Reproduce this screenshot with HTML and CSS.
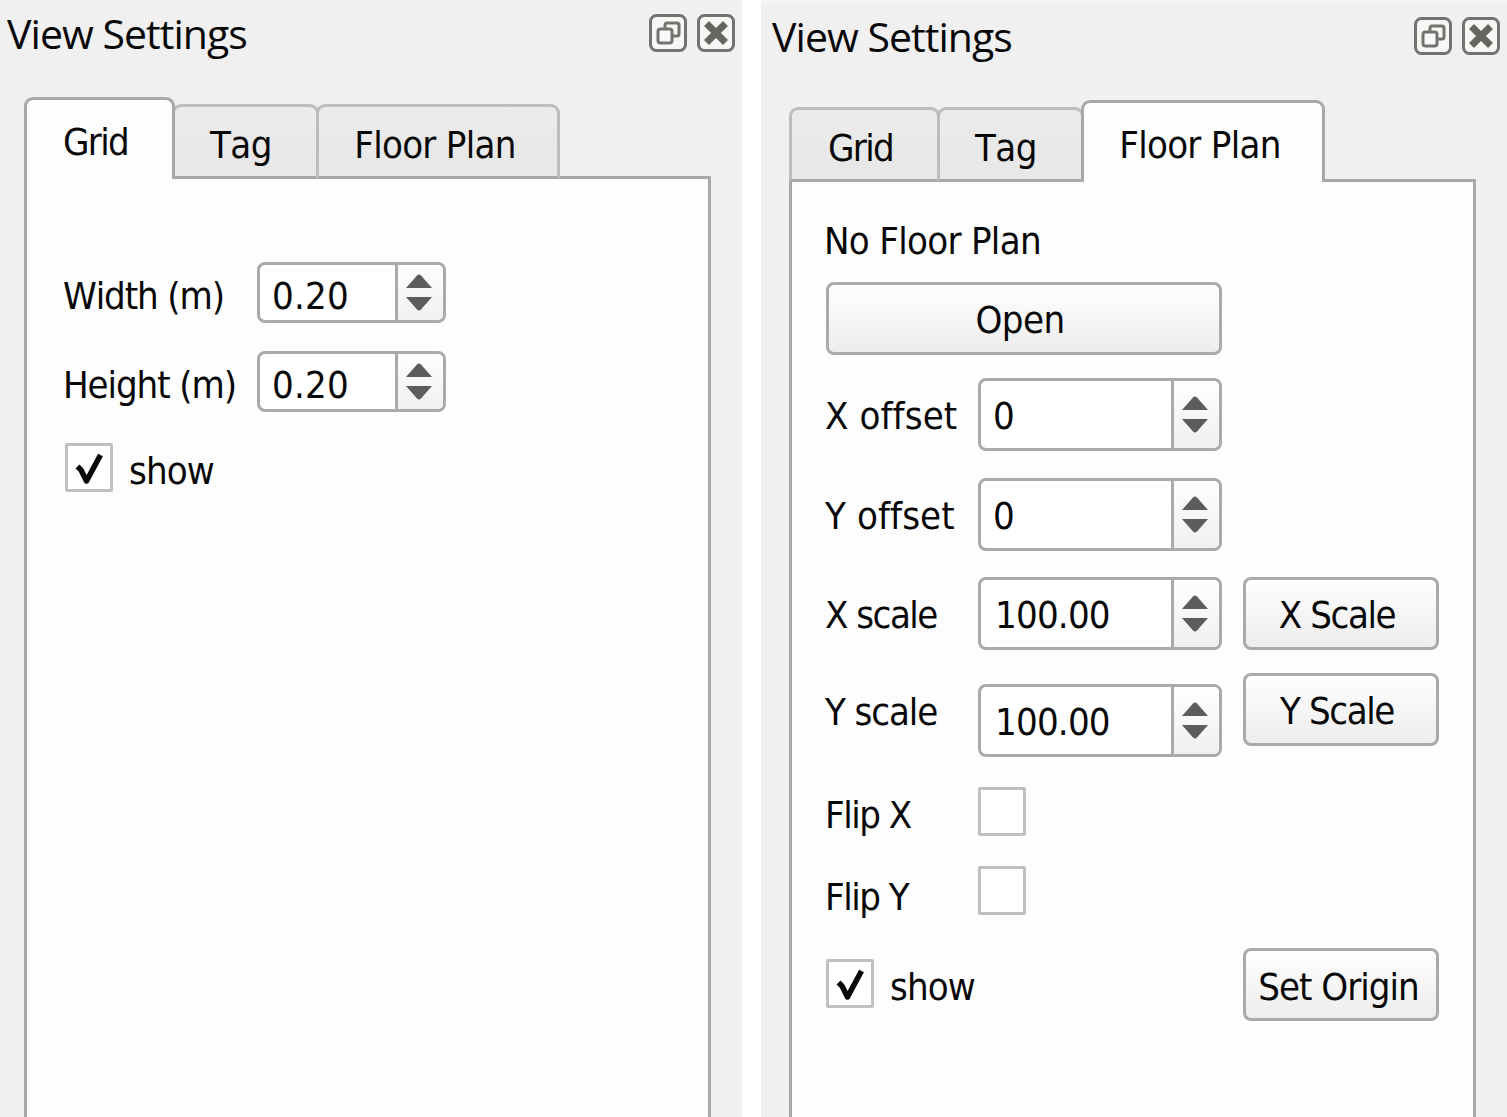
FILE: index.html
```html
<!DOCTYPE html>
<html lang="en">
<head>
<meta charset="utf-8">
<title>View Settings</title>
<link rel="stylesheet" href="styles.css">
</head>
<body>
<svg class="defs" width="0" height="0">
  <symbol id="float" viewBox="0 0 38 38">
    <rect x="1.5" y="1.5" width="35" height="35" rx="6" fill="#f7f7f6" stroke="#74736f" stroke-width="3"/>
    <path d="M16 14V11Q16 9 18 9H28Q30 9 30 11V20Q30 22 28 22H24" fill="none" stroke="#74736f" stroke-width="3"/>
    <rect x="9" y="15" width="14" height="14" rx="2.5" fill="#f9f9f9" stroke="#74736f" stroke-width="3"/>
  </symbol>
  <symbol id="close" viewBox="0 0 38 38">
    <rect x="1.5" y="1.5" width="35" height="35" rx="6" fill="#f7f7f6" stroke="#74736f" stroke-width="3"/>
    <path d="M9.500 9.500L28.500 28.500M28.500 9.500L9.500 28.500" fill="none" stroke="#666560" stroke-width="7"/>
  </symbol>
  <symbol id="arrows" viewBox="0 0 28 38">
    <path d="M1 14L12 1.500Q14 -.5 16 1.500L27 14Z" fill="#5c5c5c"/>
    <path d="M1 23H27L16 35.500Q14 37.500 12 35.500Z" fill="#5c5c5c"/>
  </symbol>
  <symbol id="tick" viewBox="0 0 28 34">
    <path d="M2.500 14.500L6 18L11.500 29L25.500 3" fill="none" stroke="#080808" stroke-width="5.500" stroke-linejoin="round"/>
  </symbol>
</svg>
<main class="docks">
  <section class="dock">
    <header class="titlebar">
      <h1 class="title">View Settings</h1>
      <svg class="tool"><use href="#float"/></svg>
      <svg class="tool"><use href="#close"/></svg>
    </header>
    <nav class="tabs">
      <div class="tab tab-grid selected">Grid</div>
      <div class="tab tab-tag">Tag</div>
      <div class="tab tab-plan">Floor Plan</div>
    </nav>
    <div class="pane grid-form">
      <label class="label">Width (m)</label>
      <div class="spin"><span class="value">0.20</span><span class="steps"><svg><use href="#arrows"/></svg></span></div>
      <label class="label">Height (m)</label>
      <div class="spin"><span class="value">0.20</span><span class="steps"><svg><use href="#arrows"/></svg></span></div>
      <div class="check-row"><span class="box"><svg><use href="#tick"/></svg></span><span class="check-label">show</span></div>
    </div>
  </section>
  <section class="dock dock-right">
    <header class="titlebar">
      <h1 class="title">View Settings</h1>
      <svg class="tool"><use href="#float"/></svg>
      <svg class="tool"><use href="#close"/></svg>
    </header>
    <nav class="tabs">
      <div class="tab tab-grid">Grid</div>
      <div class="tab tab-tag">Tag</div>
      <div class="tab tab-plan selected">Floor Plan</div>
    </nav>
    <div class="pane plan-form">
      <div class="status">No Floor Plan</div>
      <div class="button open">Open</div>
      <label class="label first offset">X offset</label>
      <div class="spin"><span class="value">0</span><span class="steps"><svg><use href="#arrows"/></svg></span></div>
      <label class="label first offset">Y offset</label>
      <div class="spin"><span class="value">0</span><span class="steps"><svg><use href="#arrows"/></svg></span></div>
      <label class="label first">X scale</label>
      <div class="spin"><span class="value decimal">100.00</span><span class="steps"><svg><use href="#arrows"/></svg></span></div>
      <div class="button">X Scale</div>
      <label class="label first y-scale">Y scale</label>
      <div class="spin lowered"><span class="value decimal">100.00</span><span class="steps"><svg><use href="#arrows"/></svg></span></div>
      <div class="button">Y Scale</div>
      <label class="label first flip-x">Flip X</label>
      <span class="box"></span>
      <label class="label first flip-y">Flip Y</label>
      <span class="box"></span>
      <div class="check-row first lowered"><span class="box"><svg><use href="#tick"/></svg></span><span class="check-label">show</span></div>
      <div class="button origin">Set Origin</div>
    </div>
  </section>
</main>
</body>
</html>
```
FILE: styles.css
```css
* { box-sizing: border-box; }
body {
  margin: 0;
  background: #fff;
  color: #080808;
  font: 38px "DejaVu Sans Condensed", "DejaVu Sans", sans-serif;
  font-stretch: condensed;
  font-kerning: none;
  letter-spacing: -0.9px;
  white-space: nowrap;
  overflow: hidden;
}
.defs { display: block; height: 0; }
.docks {
  display: grid;
  grid-template-columns: 742px 746px;
  column-gap: 19px;
  height: 1117px;
}
.dock {
  display: flex;
  flex-direction: column;
  background: #f0f0f0;
  padding: 0 31px 0 24px;
}
.dock-right {
  border-top: 3px solid #f5f5f5;
  padding: 0 31px 0 28px;
}
.titlebar {
  display: flex;
  align-items: flex-start;
  gap: 10px;
  height: 97px;
  flex: none;
  padding-top: 14px;
  margin: 0 -24px 0 -17px;
}
.title {
  flex: 1;
  margin: -10px 0 0;
  font: 41px/58px "Open Sans", "Noto Sans", sans-serif;
  letter-spacing: -0.95px;
}
.tool { width: 38px; height: 38px; flex: none; }

.tabs {
  display: flex;
  align-items: flex-end;
  height: 82px;
  flex: none;
  position: relative;
  z-index: 1;
}
.tab {
  height: 75px;
  margin-left: -3px;
  padding: 3px 6px 0 0;
  border: 3px solid #bdbdbd;
  border-bottom-color: #a8a8a8;
  border-radius: 9px 9px 0 0;
  background: linear-gradient(#ebebeb, #e7e7e7);
  line-height: 70px;
  text-align: center;
}
.tab:first-child { margin-left: 0; }
.tab-grid { width: 151px; padding-right: 8px; letter-spacing: -1.7px; }
.tab-tag { width: 147px; padding-right: 9px; letter-spacing: -0.5px; }
.tab-plan { width: 244px; letter-spacing: -0.7px; }
.tab.selected {
  height: 82px;
  padding-top: 7px;
  border-color: #a8a8a8;
  border-bottom: 0;
  background: #fdfdfd;
  z-index: 1;
}
.pane {
  flex: 1;
  margin-top: -3px;
  border: 3px solid #a8a8a8;
  border-bottom: 0;
  background: #fdfdfd;
}
.grid-form {
  display: grid;
  grid-template-columns: 194px 189px;
  grid-template-rows: 89px 92px 48px;
  align-items: start;
  padding: 83px 0 0 36px;
}
.grid-form .label { letter-spacing: -1.1px; }
.grid-form .check-row { margin-left: 2px; }
.plan-form {
  display: grid;
  grid-template-columns: 152px 244px 196px;
  grid-template-rows: 54px 96px 100px 99px 96px 114px 79px 82px 73px;
  align-items: start;
  padding: 46px 0 0 34px;
}
.plan-form .button { margin-left: 21px; width: 196px; grid-column: 3; }
.plan-form .open { grid-column: 1 / 3; margin-left: 0; width: 396px; }
.first { grid-column: 1; }
.lowered { margin-top: 11px; }
.status { grid-column: 1 / -1; line-height: 26px; margin-left: -2px; letter-spacing: -0.7px; }
.label { line-height: 68px; }
.plan-form .label { line-height: 77px; margin-left: -1px; letter-spacing: -1.5px; }
.plan-form .offset { letter-spacing: 0.1px; font-variant-ligatures: none; }
.plan-form .y-scale { line-height: 78px; letter-spacing: -1.1px; }
.plan-form .flip-x { line-height: 56px; }
.plan-form .flip-y { line-height: 63px; }

.spin {
  display: flex;
  height: 61px;
  border: 3px solid #aaa;
  border-radius: 8px;
  background: #fff;
  overflow: hidden;
}
.plan-form .spin { height: 73px; }
.value { flex: 1; padding-left: 12px; line-height: 62px; letter-spacing: 0.2px; }
.plan-form .value { line-height: 71px; }
.plan-form .decimal { padding-left: 14px; letter-spacing: -0.8px; }
.steps {
  width: 48px;
  border-left: 3px solid #aaa;
  background: linear-gradient(#fefefe, #f0f0f0);
  display: flex;
  justify-content: center;
  align-items: center;
  padding-right: 4px;
}
.steps svg { width: 28px; height: 38px; }

.button {
  height: 73px;
  padding-right: 8px;
  border: 3px solid #aaa;
  border-radius: 8px;
  background: linear-gradient(#fefefe, #ededed);
  line-height: 71px;
  text-align: center;
  letter-spacing: -1.4px;
}
.open { letter-spacing: -0.6px; }
.plan-form .origin { padding-right: 5px; letter-spacing: -1px; line-height: 73px; }
.box {
  display: flex;
  justify-content: center;
  width: 48px;
  height: 49px;
  border: 3px solid #c0c0c0;
  border-radius: 2px;
  background: #fff;
}
.box svg { width: 28px; height: 34px; margin-top: 6px; }
.check-row { display: flex; gap: 16px; }
.check-label { line-height: 57px; }
```
